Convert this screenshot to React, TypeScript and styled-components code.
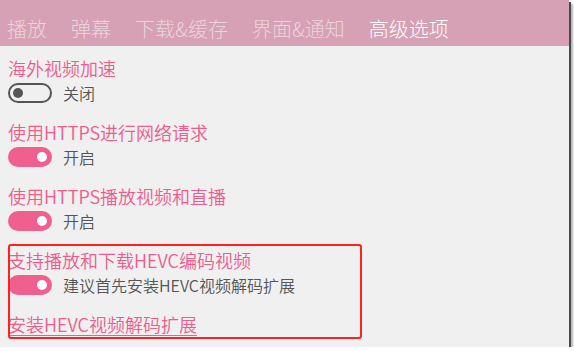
import React, { useState } from "react";
import styled, { createGlobalStyle } from "styled-components";

const GlobalStyle = createGlobalStyle`
  body {
    margin: 0;
    background: #ffffff;
    font-family: "Noto Sans CJK SC", "Noto Sans", sans-serif;
  }
`;

type Setting = {
  title: string;
  on: boolean;
  label: string;
};

const tabs = ["播放", "弹幕", "下载&缓存", "界面&通知", "高级选项"];

const settings: Setting[] = [
  { title: "海外视频加速", on: false, label: "关闭" },
  { title: "使用HTTPS进行网络请求", on: true, label: "开启" },
  { title: "使用HTTPS播放视频和直播", on: true, label: "开启" },
  { title: "支持播放和下载HEVC编码视频", on: true, label: "建议首先安装HEVC视频解码扩展" },
];

export default function App() {
  const [active, setActive] = useState<number>(4);
  const [values, setValues] = useState<boolean[]>(settings.map((s) => s.on));

  function toggle(i: number) {
    setValues(values.map((v, j) => (j === i ? !v : v)));
  }

  return (
    <>
      <GlobalStyle />
      <Window>
        <Header>
          {tabs.map((t, i) => (
            <Tab key={t} $active={i === active} onClick={() => setActive(i)}>
              {t}
            </Tab>
          ))}
        </Header>
        <Content>
          {settings.map((s, i) => (
            <Section key={s.title}>
              <Heading>{s.title}</Heading>
              <ToggleRow>
                <Switch $on={values[i]} onClick={() => toggle(i)}>
                  <Knob $on={values[i]} />
                </Switch>
                <SwitchLabel>{i === 3 ? s.label : values[i] ? "开启" : "关闭"}</SwitchLabel>
              </ToggleRow>
            </Section>
          ))}
          <Link href="#">安装HEVC视频解码扩展</Link>
        </Content>
        {/* red annotation frame drawn over the screenshot */}
        <Highlight />
      </Window>
    </>
  );
}

const Window = styled.div`
  position: relative;
  width: 569px;
  height: 347px;
  background: #f0f0f0;
  box-shadow: 2px 2px 0 #4a4a4a, 4px 4px 2px #b4b4b4;
`;

const Header = styled.div`
  display: flex;
  gap: 24px;
  height: 46px;
  box-sizing: border-box;
  padding: 15px 0 0 7px;
  background: #d6a1b4;
`;

const Tab = styled.div<{ $active: boolean }>`
  font-size: 20px;
  font-weight: 300;
  line-height: 27px;
  color: ${(p) => (p.$active ? "#ffffff" : "rgba(255, 255, 255, 0.55)")};
  cursor: pointer;
`;

const Content = styled.div`
  display: flex;
  flex-direction: column;
  gap: 14px;
  padding: 9px 0 0 8px;
`;

const Section = styled.div`
  display: flex;
  flex-direction: column;
`;

const Heading = styled.div`
  font-size: 18px;
  font-weight: 350;
  line-height: 26px;
  color: #ef5b8d;
`;

const ToggleRow = styled.div`
  display: flex;
  align-items: center;
  gap: 11px;
  height: 24px;
`;

const Switch = styled.div<{ $on: boolean }>`
  width: 44px;
  height: 20px;
  box-sizing: border-box;
  border-radius: 10px;
  border: 2px solid ${(p) => (p.$on ? "#f0608f" : "#555555")};
  background: ${(p) => (p.$on ? "#f0608f" : "transparent")};
  display: flex;
  align-items: center;
  justify-content: ${(p) => (p.$on ? "flex-end" : "flex-start")};
  padding: 0 3px;
  cursor: pointer;
`;

const Knob = styled.div<{ $on: boolean }>`
  width: 10px;
  height: 10px;
  border-radius: 50%;
  background: ${(p) => (p.$on ? "#ffffff" : "#555555")};
`;

const SwitchLabel = styled.span`
  font-size: 16px;
  font-weight: 350;
  color: #555555;
`;

const Link = styled.a`
  align-self: flex-start;
  font-size: 18px;
  font-weight: 350;
  line-height: 26px;
  color: #ef5b8d;
  text-decoration: underline;
  text-underline-offset: 3px;
`;

const Highlight = styled.div`
  position: absolute;
  left: 8px;
  top: 244px;
  width: 354px;
  height: 95px;
  box-sizing: border-box;
  border: 2px solid #ff2020;
  border-radius: 3px;
  pointer-events: none;
`;
